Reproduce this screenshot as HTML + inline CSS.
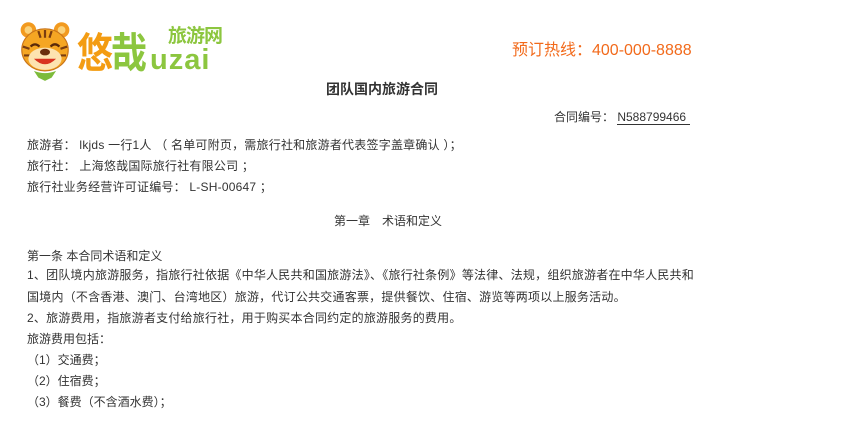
<!DOCTYPE html>
<html><head><meta charset="utf-8"><style>
body{margin:0;width:856px;height:433px;background:#fff;position:relative;overflow:hidden;font-family:"Liberation Sans","Noto Sans CJK SC",sans-serif;color:#333;font-size:12px}
.a{position:absolute;white-space:nowrap;line-height:16px}
.t{letter-spacing:0.22px}
</style></head><body>
<svg class="a" style="left:18px;top:20px" width="54" height="62" viewBox="0 0 48 56">
<circle cx="9" cy="9" r="7" fill="#f29a1f"/><circle cx="39" cy="9" r="7" fill="#f29a1f"/>
<circle cx="9" cy="9" r="3.5" fill="#fbd27a"/><circle cx="39" cy="9" r="3.5" fill="#fbd27a"/>
<ellipse cx="24" cy="27" rx="21" ry="19" fill="#f5a623" stroke="#c9741a" stroke-width="1"/>
<path d="M18 10 l2 6 M24 9 v7 M30 10 l-2 6 M4 24 l6 2 M44 24 l-6 2 M5 32 l5 0 M43 32 l-5 0" stroke="#7a3d10" stroke-width="2"/>
<ellipse cx="24" cy="35" rx="15" ry="10" fill="#fde3b0"/>
<path d="M11 24 q4 -4 8 0 M29 24 q4 -4 8 0" stroke="#5a2a0a" stroke-width="2" fill="none"/>
<ellipse cx="24" cy="29" rx="4.5" ry="3" fill="#6b2e0c"/>
<path d="M14 35 q10 10 20 0 z" fill="#d9331f"/>
<path d="M14 46 q10 4 20 0 l-4 6 l-6 3 l-6 -3 z" fill="#7dbb3a"/>
</svg>
<div class="a" style="left:77px;top:25px;font-size:36px;line-height:50px;font-weight:bold;color:#f39c12;letter-spacing:-2px;transform:scaleY(1.15);transform-origin:top left">悠<span style="color:#8cc63f">哉</span></div>
<div class="a" style="left:168px;top:26px;font-size:19px;line-height:22px;font-weight:bold;color:#8cc63f;letter-spacing:-1px">旅游网</div>
<div class="a" style="left:150px;top:43px;font-size:29px;line-height:34px;font-weight:bold;color:#8cc63f;letter-spacing:1px">uzai</div>
<div class="a" style="left:512px;top:41px;font-size:16px;line-height:20px;color:#f26a1b">预订热线：400-000-8888</div>
<div class="a" style="left:326px;top:80px;font-size:14px;line-height:18px;font-weight:bold;color:#333">团队国内旅游合同</div>
<div class="a" style="left:554px;top:109px">合同编号： <span style="border-bottom:1px solid #333;padding-right:4px">N588799466</span></div>
<div class="a t" style="left:27px;top:137px">旅游者： lkjds 一行1人 （ 名单可附页，需旅行社和旅游者代表签字盖章确认 ）；</div>
<div class="a t" style="left:27px;top:158px">旅行社： 上海悠哉国际旅行社有限公司 ；</div>
<div class="a t" style="left:27px;top:179px">旅行社业务经营许可证编号： L-SH-00647 ；</div>
<div class="a" style="left:334px;top:213px">第一章　术语和定义</div>
<div class="a" style="left:27px;top:248px">第一条 本合同术语和定义</div>
<div class="a t" style="left:27px;top:267px">1、团队境内旅游服务，指旅行社依据《中华人民共和国旅游法》、《旅行社条例》等法律、法规，组织旅游者在中华人民共和</div>
<div class="a t" style="left:27px;top:289px">国境内（不含香港、澳门、台湾地区）旅游，代订公共交通客票，提供餐饮、住宿、游览等两项以上服务活动。</div>
<div class="a t" style="left:27px;top:310px">2、旅游费用，指旅游者支付给旅行社，用于购买本合同约定的旅游服务的费用。</div>
<div class="a" style="left:27px;top:331px">旅游费用包括：</div>
<div class="a" style="left:27px;top:352px">（1）交通费；</div>
<div class="a" style="left:27px;top:373px">（2）住宿费；</div>
<div class="a" style="left:27px;top:394px">（3）餐费（不含酒水费）；</div>
</body></html>
